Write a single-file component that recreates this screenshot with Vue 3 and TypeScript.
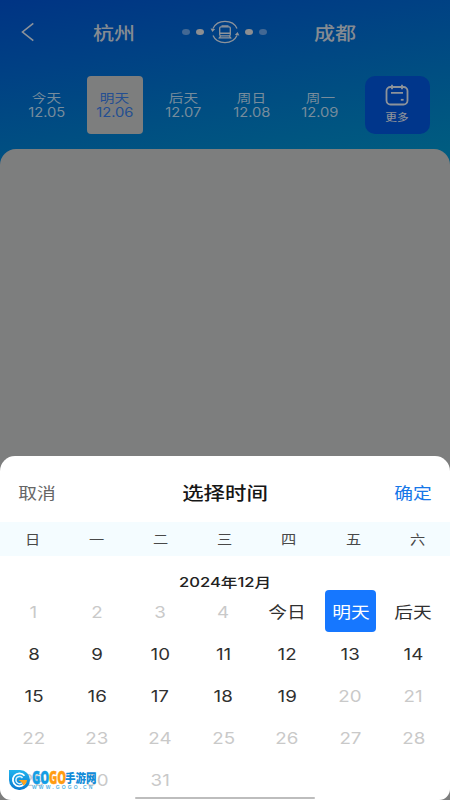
<script setup lang="ts">
interface Day { label: string; date: string; active?: boolean }
interface Cell { text: string; state: 'off' | 'on' | 'selected'; named: boolean }

const days: Day[] = [
  { label: '今天', date: '12.05' },
  { label: '明天', date: '12.06', active: true },
  { label: '后天', date: '12.07' },
  { label: '周日', date: '12.08' },
  { label: '周一', date: '12.09' },
]
const week: string[] = ['日', '一', '二', '三', '四', '五', '六']
const named: Record<number, string> = { 5: '今日', 6: '明天', 7: '后天' }
const cells: Cell[] = Array.from({ length: 31 }, (_, i) => {
  const n = i + 1
  return {
    text: named[n] ?? String(n),
    state: n === 6 ? 'selected' : n < 5 || n > 19 ? 'off' : 'on',
    named: n in named,
  }
})
</script>

<template>
  <div class="screen">
    <header class="nav">
      <svg class="back" viewBox="0 0 14 20"><path d="M12.3 1.3 1.5 10l10.8 8.7" /></svg>
      <span class="city from"><b class="w">杭州</b></span>
      <div class="swap">
        <i class="dot dim"></i><i class="dot"></i>
        <svg class="train" viewBox="0 0 30 24">
          <path d="M3 8.500C5 4.300 9.500 1.400 15 1.400c5.600 0 10.200 3 12 7.100M27 15.500C25 19.700 20.500 22.600 15 22.600c-5.600 0-10.200-3-12-7.100" />
          <path class="fill" d="M.6 8.500 5.200 9 2.400 12zM29.400 15.500 24.800 15 27.600 12z" />
          <rect x="9.700" y="6.800" width="10.600" height="9" rx="1.200" />
          <path class="fill" d="M11.500 5.200h7v1.500h-7zM9.400 12.600h11.200v1.500H9.400z" />
          <path d="M10.600 16 8.800 18.700M19.400 16l1.800 2.700M10 17.800h10" />
        </svg>
        <i class="dot"></i><i class="dot dim"></i>
      </div>
      <span class="city to"><b class="w">成都</b></span>
    </header>

    <div class="days">
      <div v-for="d in days" :key="d.date" class="day" :class="{ active: d.active }">
        <span class="w">{{ d.label }}</span>
        <span class="w num">{{ d.date }}</span>
      </div>
      <div class="more">
        <svg viewBox="0 0 24 22">
          <rect x="1.500" y="3" width="21" height="17.500" rx="4" />
          <path d="M7 .8v4.500M17 .8v4.500M6 8.800h12" /><path d="M15.800 15.800h2.800" />
        </svg>
        <span class="w">更多</span>
      </div>
    </div>

    <main class="panel"></main>

    <section class="sheet">
      <div class="bar">
        <span class="w cancel">取消</span>
        <span class="w title">选择时间</span>
        <span class="w ok">确定</span>
      </div>
      <div class="week"><span v-for="w in week" :key="w"><span class="w">{{ w }}</span></span></div>
      <div class="month"><span class="w">2024年12月</span></div>
      <div class="grid">
        <div v-for="c in cells" :key="c.text" class="cell" :class="[c.state, { named: c.named }]">
          <span class="w">{{ c.text }}</span>
        </div>
      </div>
      <div class="home"></div>
    </section>

    <div class="mark">
      <svg class="logo" viewBox="0 0 21 20">
        <defs>
          <linearGradient id="lg" x1="0" y1="0" x2="0" y2="1">
            <stop offset="0" stop-color="#22b4ee" /><stop offset="1" stop-color="#0879cf" />
          </linearGradient>
        </defs>
        <path fill="url(#lg)" stroke="none" d="M0 0h11a10 10 0 0 1 0 20h-1A10 10 0 0 1 0 10z" />
        <path d="M15.500 5.800A6.500 6.500 0 1 0 16.500 12" fill="none" stroke="#fff" stroke-width="1.800" />
        <path d="M13.500 8A3.600 3.600 0 1 0 13 12.700" fill="none" stroke="#d8f2ff" stroke-width="1.500" />
        <path d="M9.500 10h8.500a7 7 0 0 1-3.500 5.500l-1.500-3z" fill="#ffa31a" stroke="none" />
      </svg>
      <div class="words">
        <div class="brand"><b class="go">GO</b><b class="go orange">GO</b><b class="cn">手游网</b></div>
        <div class="url">WWW.GOGO.CN</div>
      </div>
    </div>
  </div>
</template>

<style>
body { margin: 0; background: #7d7e7e; }
</style>

<style scoped>
.screen {
  position: relative;
  width: 450px;
  height: 800px;
  overflow: hidden;
  display: flex;
  flex-direction: column;
  background: linear-gradient(170deg, #003484 0, #004184 75px, #004e82 145px, #005c80 225px) 0 0 / 100% 175px no-repeat, #7d7e7e;
  font-family: Roboto, "Noto Sans CJK SC", sans-serif;
}
.w { display: inline-block; transform: scaleX(1.17); white-space: nowrap; }
svg { fill: none; stroke: #8d939a; }
.nav { height: 64px; flex: none; display: flex; align-items: center; box-sizing: border-box; padding-left: 21px; }
.back { width: 14px; height: 20px; stroke-width: 1.600; }
.city { color: #858b92; font-size: 18px; line-height: 24px; width: 44px; text-align: center; padding-top: 3px; }
.city b { font-weight: 500; }
.from { margin-left: 57px; }
.swap { display: flex; align-items: center; margin-left: 46px; width: 86px; }
.dot { width: 8px; height: 6.500px; border-radius: 50%; background: #8c8e91; flex: none; }
.dot + .dot { margin-left: 6px; }
.dot.dim { background: #426894; }
.train { width: 30px; height: 24px; margin: 0 5px 0 6px; stroke-width: 1.300; flex: none; }
.fill { fill: #8d939a; stroke: none; }
.to { margin-left: 45px; }
.days { display: flex; height: 58px; margin-top: 12px; padding-left: 18px; flex: none; }
.day {
  width: 56.500px; margin-right: 12px; border-radius: 4px;
  display: flex; flex-direction: column; align-items: center;
  box-sizing: border-box; padding-top: 16px;
  color: #778c9c; font-size: 12.500px; line-height: 14px;
}
.day .num { font-family: Inter, sans-serif; font-size: 12.500px; transform: scaleX(1.18); }
.day.active { background: #7d7e7e; color: #244e91; }
.more {
  width: 65px; height: 58px; margin-left: 4px; border-radius: 10px; background: #00368b;
  color: #8b9099; font-size: 10px; line-height: 14px; font-weight: 500;
  display: flex; flex-direction: column; align-items: center;
}
.more svg { width: 24px; height: 22px; margin: 8px 0 5px; stroke-width: 1.800; }
.panel { height: 340px; margin-top: 15px; border-radius: 16px 16px 0 0; background: #7d7e7e; flex: none; }
.sheet {
  position: absolute; left: 0; right: 0; bottom: 0; height: 344px;
  background: #fff; border-radius: 15px 15px 11px 11px;
}
.bar { height: 66px; display: grid; grid-template-columns: 1fr 1fr 1fr; align-items: center; padding: 5px 21px 0; box-sizing: border-box; font-size: 16px; }
.cancel { color: #666; justify-self: start; }
.title { color: #161616; font-size: 18px; font-weight: 500; justify-self: center; transform: scaleX(1.19); }
.ok { color: #1677e8; justify-self: end; }
.week { height: 34px; background: #f4fcff; display: grid; grid-template-columns: repeat(7, 64.200px); align-items: center; text-align: center; color: #484848; font-size: 13px; line-height: 18px; padding-top: 1px; box-sizing: border-box; }
.month { height: 24px; padding-top: 10px; text-align: center; color: #222; font-size: 13px; line-height: 32px; font-weight: 500; font-family: Inter, "Noto Sans CJK SC", sans-serif; }
.month .w { transform: scaleX(1.28); }
.grid { display: grid; grid-template-columns: repeat(7, 63.300px); grid-auto-rows: 42px; padding-left: 2px; }
.cell { display: flex; align-items: center; justify-content: center; font-family: Inter, "Noto Sans CJK SC", sans-serif; font-size: 16px; color: #303030; padding-top: 2px; box-sizing: border-box; }
.cell.named { padding-top: 0; }
.cell.off { color: #c9c9c9; }
.cell.selected { background: #1677ff; color: #fff; border-radius: 4px; margin: 0 5.500px 0 6.500px; }
.home { position: absolute; left: 135px; bottom: 1px; width: 180px; height: 2.500px; border-radius: 2px; background: #bdbdbd; }
.mark { position: absolute; left: 9px; top: 770px; display: flex; }
.logo { width: 21px; height: 20px; }
.words { margin-left: 2px; width: 64px; }
.brand { display: flex; align-items: center; height: 15px; white-space: nowrap; }
.go { font: 900 17px/15px "Open Sans", sans-serif; color: #149ee5; width: 17px; flex: none; transform: scaleX(.66); transform-origin: left; -webkit-text-stroke: .4px currentColor; }
.go.orange { color: #ff9c12; }
.cn { font: 900 10.500px/15px "Noto Sans CJK SC", sans-serif; color: #118bd8; margin-left: -1px; transform: scaleY(1.15); }
.url { font: 700 5px/5px "Liberation Sans", sans-serif; letter-spacing: 2.100px; color: #55b4e5; white-space: nowrap; }
</style>
